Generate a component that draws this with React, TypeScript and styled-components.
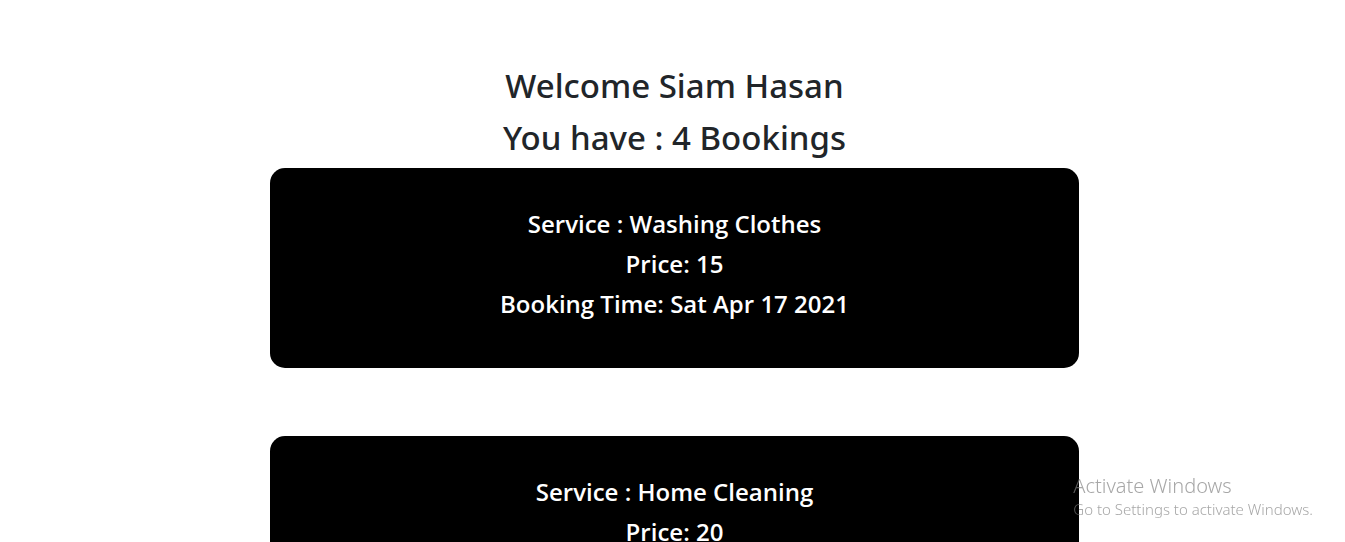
import React from "react";
import styled, { createGlobalStyle } from "styled-components";

const GlobalStyle = createGlobalStyle`
  *, *::before, *::after { box-sizing: border-box; }
  body {
    margin: 0;
    background: #fff;
    color: #212529;
    font-family: "Segoe UI", "Noto Sans", sans-serif;
    font-weight: 500;
  }
`;

const Page = styled.main`
  height: 100vh;
  overflow: hidden;
  padding: 64px 266px 0 270px;
  text-align: center;
`;

const Heading = styled.h1`
  margin: 0 0 8px;
  font-size: 33px;
  font-weight: 500;
  line-height: 44px;
`;

const BookingList = styled.div`
  display: flex;
  flex-direction: column;
  gap: 68px;
`;

const Card = styled.article`
  min-height: 200px;
  padding: 40px 48px;
  border-radius: 15px;
  background: #000;
  color: #fff;
`;

const Detail = styled.h2`
  margin: 0 0 8px;
  font-family: "Segoe UI", "Open Sans", sans-serif;
  font-size: 24px;
  font-weight: 600;
  line-height: 32px;
`;

const Watermark = styled.aside`
  position: fixed;
  right: 32px;
  bottom: 23px;
  color: rgba(130, 130, 130, 0.7);
  font-weight: 300;
  pointer-events: none;
`;

const WatermarkTitle = styled.div`
  font-size: 20px;
  line-height: 26px;
`;

const WatermarkText = styled.div`
  font-size: 15px;
  line-height: 20px;
`;

type Booking = { service: string; price: number; time?: string };

const bookings: Booking[] = [
  { service: "Washing Clothes", price: 15, time: "Sat Apr 17 2021" },
  { service: "Home Cleaning", price: 20 },
];

export default function App() {
  return (
    <>
      <GlobalStyle />
      <Page>
        <Heading>Welcome Siam Hasan</Heading>
        <Heading>You have : 4 Bookings</Heading>
        <BookingList>
          {bookings.map((b) => (
            <Card key={b.service}>
              <Detail>Service : {b.service}</Detail>
              <Detail>Price: {b.price}</Detail>
              {b.time && <Detail>Booking Time: {b.time}</Detail>}
            </Card>
          ))}
        </BookingList>
      </Page>
      <Watermark>
        <WatermarkTitle>Activate Windows</WatermarkTitle>
        <WatermarkText>Go to Settings to activate Windows.</WatermarkText>
      </Watermark>
    </>
  );
}
